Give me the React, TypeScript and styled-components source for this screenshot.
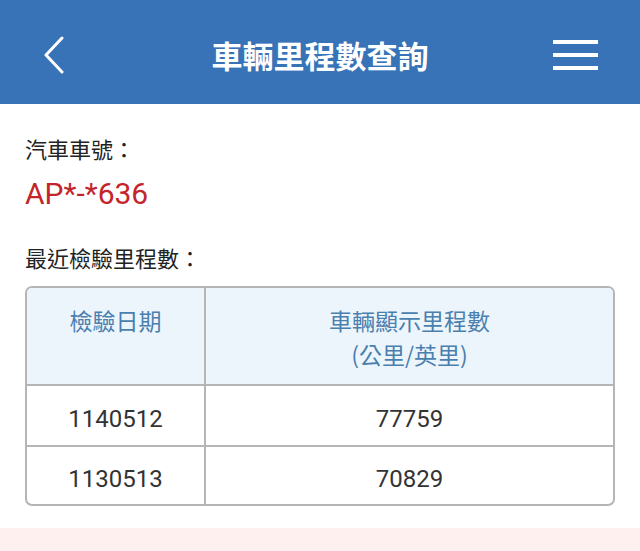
import React from 'react';
import styled, { createGlobalStyle } from 'styled-components';

const GlobalStyle = createGlobalStyle`
  body {
    margin: 0;
    background: #ffffff;
    font-family: Roboto, "Noto Sans CJK TC", "Noto Sans", sans-serif;
  }
`;

const RECORDS = [
  { date: '1140512', mileage: '77759' },
  { date: '1130513', mileage: '70829' },
];

export default function App() {
  return (
    <Page>
      <GlobalStyle />
      <TopBar>
        <IconButton $side="left" aria-label="back">
          <svg width="20" height="38" viewBox="0 0 20 38">
            <polyline
              points="18,2 2,19 18,36"
              fill="none"
              stroke="#ffffff"
              strokeWidth="3"
              strokeLinecap="round"
              strokeLinejoin="round"
            />
          </svg>
        </IconButton>
        <Title>車輛里程數查詢</Title>
        <IconButton $side="right" aria-label="menu">
          <svg width="45" height="30" viewBox="0 0 45 30">
            <rect x="0" y="0" width="45" height="4" fill="#ffffff" />
            <rect x="0" y="13" width="45" height="4" fill="#ffffff" />
            <rect x="0" y="26" width="45" height="4" fill="#ffffff" />
          </svg>
        </IconButton>
      </TopBar>

      <Content>
        <Label>汽車車號：</Label>
        <Plate>AP*-*636</Plate>
        <Label $gap>最近檢驗里程數：</Label>

        <TableFrame>
          <Table>
            <colgroup>
              <col style={{ width: 178 }} />
              <col />
            </colgroup>
            <thead>
              <tr>
                <HeadCell>檢驗日期</HeadCell>
                <HeadCell>
                  車輛顯示里程數
                  <br />
                  (公里/英里)
                </HeadCell>
              </tr>
            </thead>
            <tbody>
              {RECORDS.map((r, i) => (
                <tr key={r.date}>
                  <DataCell $last={i === RECORDS.length - 1}>{r.date}</DataCell>
                  <DataCell $last={i === RECORDS.length - 1}>{r.mileage}</DataCell>
                </tr>
              ))}
            </tbody>
          </Table>
        </TableFrame>
      </Content>

      <Footer />
    </Page>
  );
}

const Page = styled.div`
  width: 640px;
  height: 551px;
  overflow: hidden;
  display: flex;
  flex-direction: column;
`;

const TopBar = styled.header`
  height: 104px;
  box-sizing: border-box;
  padding-top: 6px;
  background: #3873b8;
  display: grid;
  grid-template-columns: 1fr auto 1fr;
  align-items: center;
  flex-shrink: 0;
`;

const IconButton = styled.div<{ $side: 'left' | 'right' }>`
  display: flex;
  align-items: center;
  justify-self: ${(p) => (p.$side === 'left' ? 'start' : 'end')};
  padding: ${(p) => (p.$side === 'left' ? '0 0 0 44px' : '0 42px 0 0')};
`;

const Title = styled.h1`
  margin: 0;
  color: #ffffff;
  font-size: 31px;
  line-height: 40px;
  font-weight: 700;
  font-family: "Noto Sans CJK TC", sans-serif;
`;

const Content = styled.main`
  padding: 28px 25px 0 25px;
  flex: 1;
`;

const Label = styled.div<{ $gap?: boolean }>`
  font-family: "Noto Sans CJK TC", sans-serif;
  font-size: 22px;
  line-height: 32px;
  color: #222222;
  margin-top: ${(p) => (p.$gap ? '27px' : '0')};
`;

const Plate = styled.div`
  font-family: Roboto, sans-serif;
  font-size: 30px;
  line-height: 40px;
  color: #c4242b;
  margin-top: 10px;
`;

const TableFrame = styled.div`
  margin-top: 13px;
  width: 586px;
  border: 2px solid #b5b5b5;
  border-radius: 7px;
  overflow: hidden;
`;

const Table = styled.table`
  width: 100%;
  border-collapse: collapse;
  table-layout: fixed;
`;

const HeadCell = styled.th`
  background: #edf5fc;
  color: #4a7fae;
  font-family: "Noto Sans CJK TC", sans-serif;
  font-weight: 400;
  font-size: 23px;
  line-height: 34px;
  height: 97px;
  box-sizing: border-box;
  padding: 15px 0 12px;
  vertical-align: top;
  text-align: center;
  border-bottom: 2px solid #b5b5b5;
  & + & {
    border-left: 2px solid #b5b5b5;
  }
`;

const DataCell = styled.td<{ $last?: boolean }>`
  font-family: Roboto, sans-serif;
  font-size: 24px;
  color: #333333;
  text-align: center;
  height: ${(p) => (p.$last ? '58px' : '61px')};
  box-sizing: border-box;
  padding: 7px 0 0;
  border-bottom: ${(p) => (p.$last ? 'none' : '2px solid #b5b5b5')};
  & + & {
    border-left: 2px solid #b5b5b5;
  }
`;

const Footer = styled.div`
  height: 23px;
  background: #fdf0ef;
  flex-shrink: 0;
`;
